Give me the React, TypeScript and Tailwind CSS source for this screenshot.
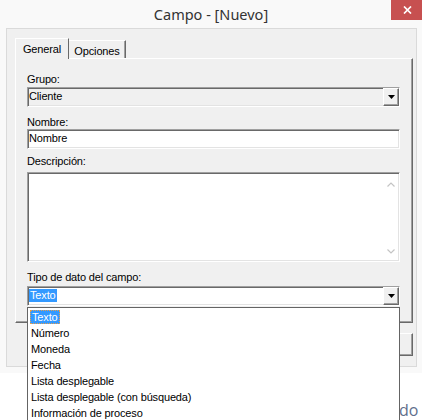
import React from 'react';

const tipos = [
  'Texto',
  'Número',
  'Moneda',
  'Fecha',
  'Lista desplegable',
  'Lista desplegable (con búsqueda)',
  'Información de proceso',
];

const sunken =
  'border border-t-[#a0a0a0] border-l-[#a0a0a0] border-r-white border-b-white shadow-[inset_1px_1px_0_#696969,inset_-1px_-1px_0_#e3e3e3]';

const raised =
  'border border-t-white border-l-white border-r-[#696969] border-b-[#696969] shadow-[inset_-1px_-1px_0_#a0a0a0]';

const ArrowButton: React.FC = () => (
  <div className={`w-[16px] h-full bg-[#f0f0f0] flex items-center justify-center ${raised}`}>
    <svg width="7" height="4" viewBox="0 0 7 4">
      <polygon points="0,0 7,0 3.5,4" fill="#000" />
    </svg>
  </div>
);

const Combo: React.FC<{ children: React.ReactNode; white?: boolean }> = ({ children, white }) => (
  <div className={`h-[20px] flex ${white ? 'bg-white' : 'bg-[#f0f0f0]'} ${sunken}`}>
    <div className="flex-1 pl-[1px] leading-[16px]">{children}</div>
    <ArrowButton />
  </div>
);

const Chevron: React.FC<{ down?: boolean }> = ({ down }) => (
  <svg width="8" height="5" viewBox="0 0 8 5">
    <polyline
      points={down ? '0.5,0.5 4,4 7.5,0.5' : '0.5,4.5 4,1 7.5,4.5'}
      fill="none"
      stroke="#c4c4c4"
      strokeWidth="1.2"
    />
  </svg>
);

export default function App() {
  return (
    <div className="relative w-[422px] h-[420px] overflow-hidden bg-white text-black text-[11px] tracking-[-0.15px] font-['Liberation_Sans',Arial,sans-serif]">
      <div className="bg-[#f9f9f9] pb-[6px]">
        {/* title bar */}
        <div className="grid grid-cols-[1fr_auto_1fr] h-[28px]">
          <div />
          <div className="pt-[4px] text-[14.5px] leading-[20px] tracking-normal text-[#333] font-['Noto_Sans',sans-serif]">
            Campo - [Nuevo]
          </div>
          <div className="flex justify-end">
            <div className="w-[31px] h-[20px] bg-[#c75050] flex items-center justify-center pl-[1px]">
              <svg width="9" height="8" viewBox="0 0 9 8">
                <path d="M1 0.5 L8 7.5 M8 0.5 L1 7.5" stroke="#fff" strokeWidth="1.7" />
              </svg>
            </div>
          </div>
        </div>

        {/* client area */}
        <div className="ml-[6px] mr-[5px] border border-[#dadada] bg-[#f0f0f0] pl-[8px] pr-[3px] pt-[9px] pb-[10px]">
          <div className="flex items-end h-[20px]">
            <div className="relative z-10 w-[54px] h-[21px] -mb-px bg-[#f0f0f0] border-t border-l border-t-white border-l-white border-r border-r-[#696969] pt-[4px] leading-[13px] text-center">
              General
            </div>
            <div className="w-[57px] h-[18px] border-t border-t-white border-r border-r-[#696969] shadow-[inset_-1px_0_0_#a0a0a0] pt-[4px] leading-[13px] text-center">
              Opciones
            </div>
          </div>

          <div className="h-[265px] border border-t-white border-l-white border-r-[#696969] border-b-[#696969] shadow-[inset_-1px_-1px_0_#a0a0a0] pl-[11px] pr-[12px] pt-[14px] leading-[13px]">
            <div>Grupo:</div>
            <div className="mt-[1px]">
              <Combo>Cliente</Combo>
            </div>

            <div className="mt-[9px]">Nombre:</div>
            <div className={`h-[20px] bg-white pl-[1px] leading-[16px] ${sunken}`}>Nombre</div>

            <div className="mt-[6px]">Descripción:</div>
            <div className={`mt-[4px] h-[90px] bg-white flex ${sunken}`}>
              <div className="flex-1" />
              <div className="w-[17px] flex flex-col items-center justify-between pt-[9px] pb-[7px]">
                <Chevron />
                <Chevron down />
              </div>
            </div>

            <div className="mt-[9px]">Tipo de dato del campo:</div>
            <div className="mt-[2px]">
              <Combo white>
                <span className="inline-block bg-[#3399ff] text-white px-[1px] leading-[13px]">Texto</span>
              </Combo>
            </div>
          </div>

          <div className="flex justify-end gap-[6px] mt-[10px]">
            <div className={`w-[75px] h-[23px] bg-[#f0f0f0] flex items-center justify-center ${raised}`}>Aceptar</div>
            <div className={`w-[75px] h-[23px] bg-[#f0f0f0] flex items-center justify-center ${raised}`}>Cancelar</div>
          </div>
        </div>
      </div>

      {/* text of the page behind the dialog, mostly hidden by the list */}
      <div className="absolute left-[399px] top-[402px] text-[16px] leading-[16px] tracking-normal text-[#5f6f8c] font-['Open_Sans',sans-serif]">
        do
      </div>

      {/* open dropdown list */}
      <div className="absolute left-[27px] top-[307px] w-[373px] h-[113px] bg-white border border-b-0 border-[#646464] pt-[1px]">
        {tipos.map((t, i) => (
          <div key={t} className="h-[16px] leading-[16px] pl-[2px] flex items-center">
            {i === 0 ? (
              <span className="inline-block bg-[#3399ff] text-white px-[1px] leading-[12px] border border-dotted border-[#e8a04c]">
                {t}
              </span>
            ) : (
              <span className="pl-[1px]">{t}</span>
            )}
          </div>
        ))}
      </div>
    </div>
  );
}
